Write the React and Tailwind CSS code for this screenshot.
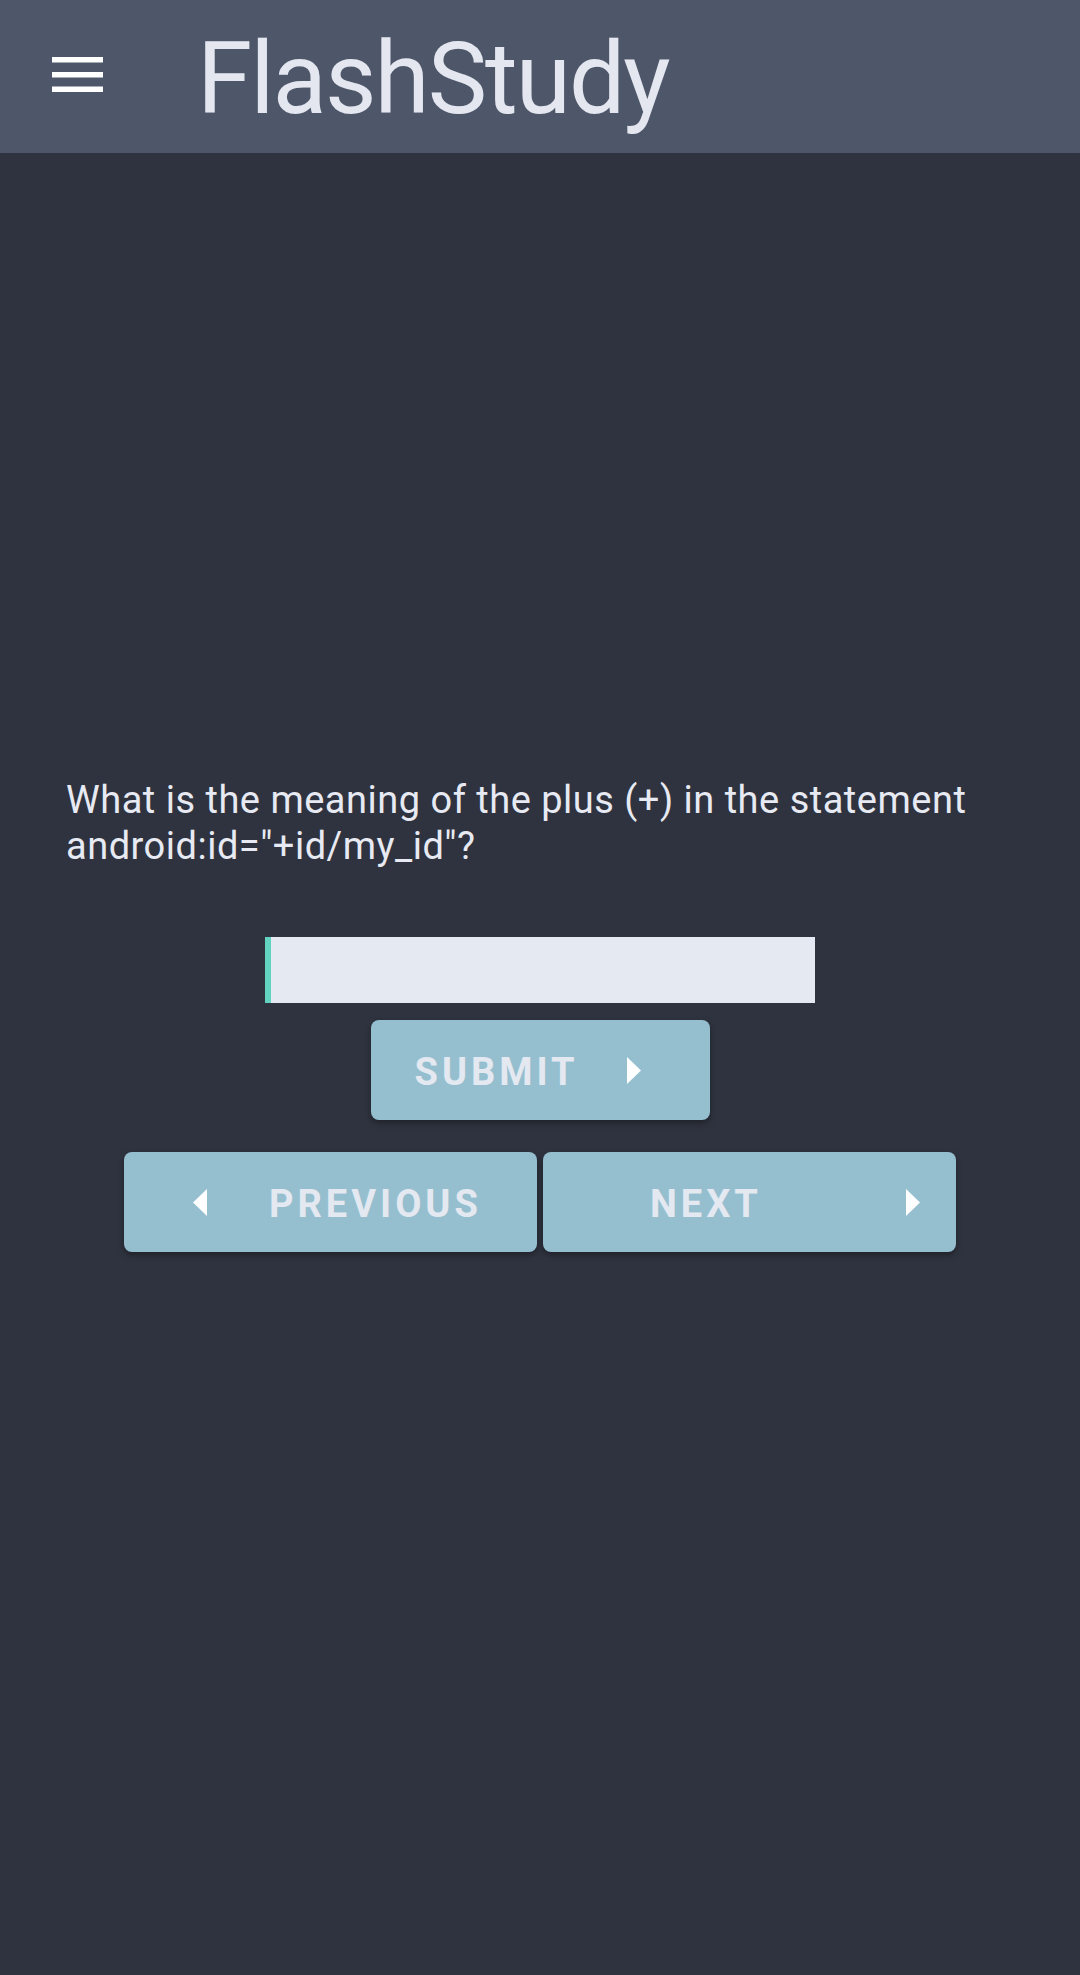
import React from "react";

function Tri({ dir = "right" }) {
  return (
    <svg width="14" height="27" viewBox="0 0 14 27" className="shrink-0">
      {dir === "right" ? (
        <polygon points="0,0 14,13.5 0,27" fill="#ffffff" />
      ) : (
        <polygon points="14,0 0,13.5 14,27" fill="#ffffff" />
      )}
    </svg>
  );
}

export default function App() {
  return (
    <div
      className="w-[1080px] min-h-[1975px] bg-[#2f333f] flex flex-col"
      style={{ fontFamily: "Roboto, 'Noto Sans', sans-serif" }}
    >
      <header className="h-[153px] bg-[#4e5669] flex items-start pl-[52px] shrink-0">
        <svg width="51" height="36" viewBox="0 0 51 36" className="mt-[57px] shrink-0">
          <rect x="0" y="0" width="51" height="5.5" fill="#ffffff" />
          <rect x="0" y="15" width="51" height="5.5" fill="#ffffff" />
          <rect x="0" y="29.5" width="51" height="5.5" fill="#ffffff" />
        </svg>
        <h1 className="ml-[94px] mt-[29px] text-[100px] leading-[100px] tracking-[-2px] text-[#e4e7ef] font-normal">
          FlashStudy
        </h1>
      </header>

      <main className="flex flex-col items-center pt-[624px]">
        <p className="self-start pl-[66px] pr-[40px] text-[38px] leading-[46px] tracking-[0.5px] text-[#e7eaf2]">
          What is the meaning of the plus (+) in the statement
          <br />
          android:id="+id/my_id"?
        </p>

        <div className="mt-[68px] w-[550px] h-[66px] bg-[#e5e9f1] border-l-[6px] border-[#63d3c1]" />

        <button className="mt-[17px] w-[339px] h-[100px] rounded-[8px] bg-[#95bfcf] shadow-[0_3px_6px_rgba(0,0,0,0.35)] flex items-center justify-between pl-[44px] pr-[69px]">
          <span className="mt-[4px] text-[38px] font-bold tracking-[4px] text-[#e4e8f0]">SUBMIT</span>
          <Tri dir="right" />
        </button>

        <div className="mt-[32px] flex gap-[6px]">
          <button className="w-[413px] h-[100px] rounded-[8px] bg-[#95bfcf] shadow-[0_3px_6px_rgba(0,0,0,0.35)] flex items-center pl-[69px]">
            <Tri dir="left" />
            <span className="mt-[4px] ml-[62px] text-[38px] font-bold tracking-[4px] text-[#e4e8f0]">PREVIOUS</span>
          </button>
          <button className="w-[413px] h-[100px] rounded-[8px] bg-[#95bfcf] shadow-[0_3px_6px_rgba(0,0,0,0.35)] flex items-center justify-between pl-[107px] pr-[36px]">
            <span className="mt-[4px] text-[38px] font-bold tracking-[4px] text-[#e4e8f0]">NEXT</span>
            <Tri dir="right" />
          </button>
        </div>
      </main>
    </div>
  );
}
